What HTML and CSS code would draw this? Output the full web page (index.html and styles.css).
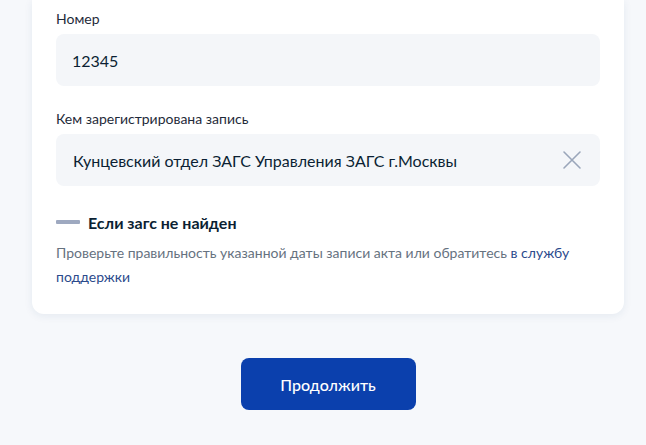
FILE: index.html
```html
<!DOCTYPE html>
<html lang="ru">
<head>
<meta charset="utf-8">
<link rel="stylesheet" href="styles.css">
</head>
<body>
<div class="page">
  <div class="card">
    <div class="field">
      <div class="label">Номер</div>
      <div class="input"><span class="value">12345</span></div>
    </div>
    <div class="field">
      <div class="label">Кем зарегистрирована запись</div>
      <div class="input">
        <span class="value value-long">Кунцевский отдел ЗАГС Управления ЗАГС г.Москвы</span>
        <svg class="clear" width="20" height="20" viewBox="0 0 20 20"><path d="M2 2 L18 18 M18 2 L2 18" stroke="#9aa6ba" stroke-width="1.6" fill="none" stroke-linecap="round"/></svg>
      </div>
    </div>
    <div class="note-head"><span class="dash"></span><span class="note-title">Если загс не найден</span></div>
    <p class="note-text"><span class="note-line">Проверьте правильность указанной даты записи акта или обратитесь <a class="link" href="#">в службу</a></span> <a class="link" href="#">поддержки</a></p>
  </div>
  <div class="actions">
    <button class="btn">Продолжить</button>
  </div>
</div>
</body>
</html>
```
FILE: styles.css
```css
html, body {
  margin: 0;
  padding: 0;
}
body {
  background: #f6f8fb;
  font-family: Lato, "Noto Sans", sans-serif;
  color: #0b1f33;
  width: 646px;
  height: 445px;
  overflow: hidden;
}
.page {
  padding-left: 32px;
  width: 592px;
}
.card {
  background: #ffffff;
  border-radius: 0 0 12px 12px;
  box-shadow: 0 2px 8px rgba(30, 60, 120, 0.08);
  padding: 9px 24px 25px;
}
.field + .field {
  margin-top: 23px;
}
.label {
  font-size: 14px;
  line-height: 20px;
  color: #1f2b3a;
  margin-bottom: 5px;
}
.input {
  height: 52px;
  background: #f4f6f9;
  border-radius: 8px;
  display: flex;
  align-items: center;
  justify-content: space-between;
  padding: 0 18px 0 16px;
}
.value {
  font-size: 16px;
  color: #0b1f33;
}
.value-long {
  margin-left: 1px;
}
.clear {
  display: block;
}
.note-head {
  margin-top: 24px;
  display: flex;
  align-items: center;
  height: 24px;
}
.dash {
  width: 24px;
  height: 4px;
  background: #9ea9c0;
  border-radius: 1px;
  margin-right: 8px;
}
.note-title {
  font-size: 16px;
  font-weight: 700;
  color: #0b1f33;
}
.note-text {
  margin: 7px 0 0;
  font-size: 14px;
  line-height: 24px;
  color: #66727f;
}
.note-line {
  display: block;
}
.link {
  color: #2b4a8c;
  text-decoration: none;
}
.actions {
  display: flex;
  justify-content: center;
  margin-top: 44px;
}
.btn {
  width: 175px;
  height: 52px;
  border: none;
  border-radius: 8px;
  background: #0b40ad;
  color: #ffffff;
  font-family: Lato, "Noto Sans", sans-serif;
  font-size: 16px;
  font-weight: 500;
}
```
